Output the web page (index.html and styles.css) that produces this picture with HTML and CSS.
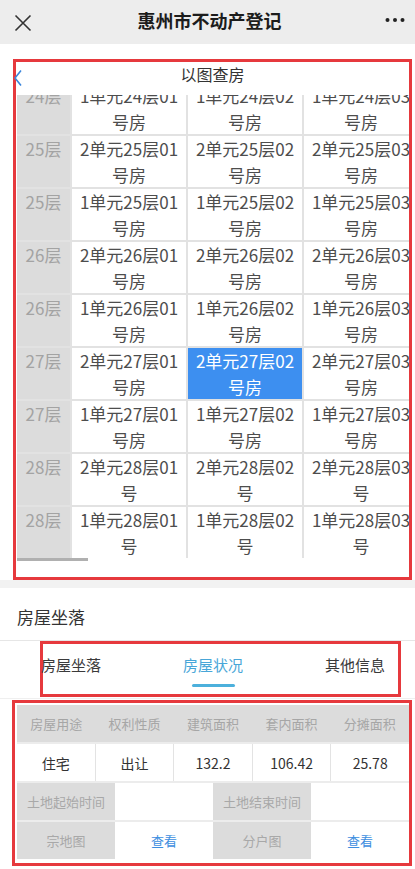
FILE: index.html
```html
<!DOCTYPE html>
<html lang="zh-CN">
<head>
<meta charset="utf-8">
<title>惠州市不动产登记</title>
<link rel="stylesheet" href="styles.css">
</head>
<body>
<header class="nav">
  <svg class="nav-close" width="18" height="18" viewBox="0 0 18 18"><path d="M1.5 1.5 L16.5 16.5 M16.5 1.5 L1.5 16.5" stroke="#333" stroke-width="1.6" fill="none"/></svg>
  <div class="nav-title">惠州市不动产登记</div>
  <svg class="nav-more" width="20" height="6" viewBox="0 0 20 6"><circle cx="2.5" cy="3" r="2" fill="#222"/><circle cx="10" cy="3" r="2" fill="#222"/><circle cx="17.5" cy="3" r="2" fill="#222"/></svg>
</header>

<section class="finder">
  <div class="finder-head">
    <svg class="finder-back" width="10" height="18" viewBox="0 0 10 18"><path d="M7 1.5 L1 9 L7 16.5" stroke="#3b86dc" stroke-width="1.6" fill="none"/></svg>
    <div class="finder-title">以图查房</div>
  </div>
  <div class="board-view">
    <div class="board">
      <div class="floor">24层</div><div class="room">1单元24层01号房</div><div class="room">1单元24层02号房</div><div class="room">1单元24层03号房</div>
      <div class="floor">25层</div><div class="room">2单元25层01号房</div><div class="room">2单元25层02号房</div><div class="room">2单元25层03号房</div>
      <div class="floor">25层</div><div class="room">1单元25层01号房</div><div class="room">1单元25层02号房</div><div class="room">1单元25层03号房</div>
      <div class="floor">26层</div><div class="room">2单元26层01号房</div><div class="room">2单元26层02号房</div><div class="room">2单元26层03号房</div>
      <div class="floor">26层</div><div class="room">1单元26层01号房</div><div class="room">1单元26层02号房</div><div class="room">1单元26层03号房</div>
      <div class="floor">27层</div><div class="room">2单元27层01号房</div><div class="room room-active">2单元27层02号房</div><div class="room">2单元27层03号房</div>
      <div class="floor">27层</div><div class="room">1单元27层01号房</div><div class="room">1单元27层02号房</div><div class="room">1单元27层03号房</div>
      <div class="floor">28层</div><div class="room">2单元28层01号</div><div class="room">2单元28层02号</div><div class="room">2单元28层03号</div>
      <div class="floor">28层</div><div class="room">1单元28层01号</div><div class="room">1单元28层02号</div><div class="room">1单元28层03号</div>
    </div>
  </div>
  <div class="scroll-track"><div class="scroll-thumb"></div></div>
  <div class="finder-foot"></div>
</section>

<div class="gap-strip"></div>

<div class="section-title">房屋坐落</div>

<nav class="tabs">
  <div class="tab">房屋坐落</div>
  <div class="tab tab-active">房屋状况</div>
  <div class="tab">其他信息</div>
</nav>

<section class="info">
  <div class="info-table">
    <div class="row row-5 row-head">
      <div class="cell">房屋用途</div><div class="cell">权利性质</div><div class="cell">建筑面积</div><div class="cell">套内面积</div><div class="cell">分摊面积</div>
    </div>
    <div class="row row-5 row-values">
      <div class="cell">住宅</div><div class="cell">出让</div><div class="cell">132.2</div><div class="cell">106.42</div><div class="cell">25.78</div>
    </div>
    <div class="row row-4">
      <div class="cell label">土地起始时间</div><div class="cell value"></div><div class="cell label">土地结束时间</div><div class="cell value"></div>
    </div>
    <div class="row row-4">
      <div class="cell label">宗地图</div><div class="cell value link">查看</div><div class="cell label">分户图</div><div class="cell value link">查看</div>
    </div>
  </div>
</section>
</body>
</html>
```
FILE: styles.css
```css
* { box-sizing: border-box; }
html, body { margin: 0; padding: 0; }
body {
  width: 415px;
  overflow-x: hidden;
  background: #fff;
  font-family: "Noto Sans CJK SC", "Noto Sans", sans-serif;
  color: #333;
}

.nav {
  height: 44px;
  background: #ededed;
  display: grid;
  grid-template-columns: 1fr auto 1fr;
  align-items: center;
  padding: 0 10px 0 14px;
}
.nav-close { justify-self: start; margin-top: 1px; }
.nav-title {
  font-size: 18px;
  font-weight: bold;
  color: #1c1c1c;
  line-height: 24px;
  margin-top: -4px;
}
.nav-more { justify-self: end; margin-top: -5px; }

.finder {
  margin: 15px 3px 0 13px;
  border: 3px solid #e6393d;
}
.finder-head {
  height: 33px;
  display: grid;
  grid-template-columns: 1fr auto 1fr;
  align-items: start;
}
.finder-back { grid-column: 1; grid-row: 1; margin-left: -2px; margin-top: 7px; }
.finder-title {
  grid-column: 2;
  grid-row: 1;
  font-size: 16px;
  color: #333;
  line-height: 22px;
  padding-top: 1px;
}

.board-view {
  height: 463px;
  overflow: hidden;
  padding-left: 1px;
}
.board {
  margin-top: -12px;
  display: grid;
  grid-template-columns: 53px repeat(3, 114px);
  grid-auto-rows: 51px;
  gap: 2px;
  background: #e2e2e2;
  width: max-content;
}
.floor {
  background: #dcdcdc;
  color: #a3a3a3;
  font-size: 17px;
  line-height: 26px;
  text-align: center;
}
.room {
  background: #fff;
  color: #4d4d4d;
  font-size: 17px;
  line-height: 26px;
  text-align: center;
  padding: 0 6px;
  overflow: hidden;
}
.room-active {
  background: #3d8ff0;
  color: #fff;
}

.scroll-track {
  height: 3px;
  padding-left: 1px;
}
.scroll-thumb {
  width: 71px;
  height: 3px;
  background: #b0b0b0;
}
.finder-foot { height: 16px; }

.gap-strip {
  height: 8px;
  background: #f2f2f2;
}

.section-title {
  height: 53px;
  padding: 4px 0 0 17px;
  display: flex;
  align-items: center;
  font-size: 17px;
  color: #333;
  border-bottom: 1px solid #e6e6e6;
}

.tabs {
  position: relative;
  height: 58px;
  display: grid;
  grid-template-columns: repeat(3, 142px);
  border-bottom: 1px solid #efefef;
}
.tabs::before {
  content: "";
  position: absolute;
  top: 0;
  left: 40px;
  width: 355px;
  height: 50px;
  border: 3px solid #e6393d;
  pointer-events: none;
}
.tab {
  position: relative;
  text-align: center;
  font-size: 15px;
  line-height: 20px;
  padding-top: 14px;
  color: #3a3a3a;
}
.tab-active { color: #48a6d8; }
.tab-active::after {
  content: "";
  position: absolute;
  top: 43px;
  left: 50%;
  width: 43px;
  height: 3px;
  margin-left: -21px;
  background: #4cb0dc;
  border-radius: 2px;
}

.info {
  margin: 1px 3px 3px 12px;
  border: 3px solid #e6393d;
  padding: 2px 0 4px 2px;
}
.info-table {
  display: flex;
  flex-direction: column;
  gap: 2px;
  background: #ececec;
}
.row {
  display: grid;
  height: 37px;
}
.row-5 { grid-template-columns: repeat(5, 1fr); }
.row-4 { grid-template-columns: repeat(4, 1fr); }
.cell {
  display: flex;
  align-items: center;
  justify-content: center;
  font-size: 13px;
  white-space: nowrap;
}
.row-head { background: #dcdcdc; }
.row-head .cell { color: #a6a6a6; }
.row-values { gap: 1px; background: #e3e3e3; }
.row-values .cell { background: #fff; color: #333; font-size: 14px; }
.label { background: #dcdcdc; color: #a8a8a8; }
.value { background: #fff; }
.link { color: #3d8ee0; }
```
